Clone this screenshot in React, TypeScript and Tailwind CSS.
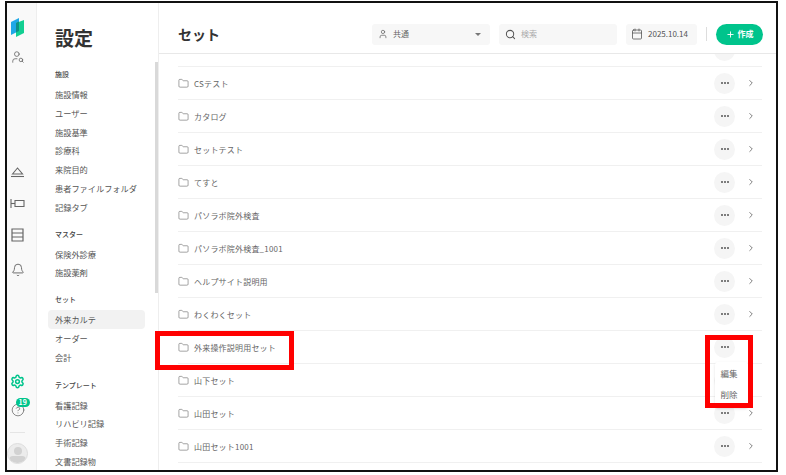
import { Bell, Calendar, ChevronRight, CircleHelp, Folder, Plus, Search, Settings, User, UserSearch } from "lucide-react"

const font = { fontFamily: '"Noto Sans CJK JP", "Noto Sans", sans-serif' }

const menu = [
  { title: "施設", top: "mt-[12px]", items: ["施設情報", "ユーザー", "施設基準", "診療科", "来院目的", "患者ファイルフォルダ", "記録タブ"] },
  { title: "マスター", top: "mt-[8px]", items: ["保険外診療", "施設薬剤"] },
  { title: "セット", top: "mt-[8px]", items: ["外来カルテ", "オーダー", "会計"] },
  { title: "テンプレート", top: "mt-[9px]", items: ["看護記録", "リハビリ記録", "手術記録", "文書記録物"] },
]

const rows = ["", "CSテスト", "カタログ", "セットテスト", "てすと", "パソラボ院外検査", "パソラボ院外検査_1001", "ヘルプサイト説明用", "わくわくセット", "外来操作説明用セット", "山下セット", "山田セット", "山田セット1001"]

const Logo = () => (
  <svg width="13" height="20" viewBox="0 0 13 20">
    <path d="M0 5 L8 1 V14 L0 18 Z" fill="#1fa8e6" />
    <path d="M5 6 L13 3 V16 L5 20 Z" fill="#12cf92" />
    <path d="M5 6 L8 4.5 V14 L5 15.5 Z" fill="#0d8f86" />
  </svg>
)

const DomeIcon = () => (
  <svg width="15" height="12" viewBox="0 0 15 12" fill="none" stroke="#666666" strokeWidth="1.1">
    <path d="M2.5 8 L7.5 2 L12.5 8 Z" />
    <path d="M1 10.5 H14" />
  </svg>
)

const BedIcon = () => (
  <svg width="15" height="11" viewBox="0 0 15 11" fill="none" stroke="#666666" strokeWidth="1.1">
    <path d="M1 1 V10" />
    <path d="M1 5.5 H5" />
    <path d="M5 2.5 H14 V8.5 H5 Z" />
  </svg>
)

const ListIcon = () => (
  <svg width="13" height="14" viewBox="0 0 13 14" fill="none" stroke="#666666" strokeWidth="1.2">
    <path d="M1 1 H12 V13 H1 Z" />
    <path d="M1 5 H12 M1 9 H12" />
  </svg>
)

const Rail = () => (
  <div className="w-[30px] shrink-0 bg-[#f9f9f9] border-r border-[#eeeeee] flex flex-col items-center pt-[14px] pr-[8px] text-[#666666]">
    <Logo />
    <UserSearch size={14} strokeWidth={1.4} className="mt-[13px]" />
    <div className="mt-[102px]"><DomeIcon /></div>
    <div className="mt-[20px]"><BedIcon /></div>
    <div className="mt-[19px]"><ListIcon /></div>
    <Bell size={14} strokeWidth={1.6} className="mt-[21px]" />
    <Settings size={15} strokeWidth={2.4} className="mt-[97px] text-[#00c48c]" />
    <div className="relative mt-[14px]">
      <CircleHelp size={14} strokeWidth={1.3} />
      <div className="absolute -top-[5px] left-[5px] h-[9px] px-[3px] rounded-full bg-[#00c48c] text-white text-[7px] leading-[9px] font-bold">19</div>
    </div>
    <div className="w-[15px] h-px bg-[#e5e5e5] mt-[15px]" />
    <div className="w-[21px] h-[21px] rounded-full bg-[#ececec] border border-[#dddddd] mt-[10px] flex flex-col items-center overflow-hidden shrink-0">
      <div className="w-[8px] h-[8px] rounded-full bg-[#d2d2d2] mt-[3px] shrink-0" />
      <div className="w-[17px] h-[8px] rounded-full bg-[#d2d2d2] mt-[1px] shrink-0" />
    </div>
  </div>
)

const Sidebar = () => (
  <div className="w-[122px] shrink-0 border-r border-[#eeeeee] relative overflow-hidden">
    <div className="pl-[18px] pt-[20px] text-[19px] leading-[30px] font-bold text-[#333333]">設定</div>
    {menu.map((group) => (
      <div key={group.title} className={group.top}>
        <div className="pl-[18px] text-[7px] leading-[18px] font-medium text-[#444444]">{group.title}</div>
        <div className="mt-[2px]">
          {group.items.map((item) => (
            <div
              key={item}
              className={`ml-[11px] mr-[13px] pl-[7px] h-[18.8px] rounded-[4px] text-[8.2px] leading-[18.8px] whitespace-nowrap text-[#555555] ${item === "外来カルテ" ? "bg-[#f2f2f2]" : ""}`}
            >
              {item}
            </div>
          ))}
        </div>
      </div>
    ))}
    <div className="absolute right-0 top-[59px] w-[3px] h-[231px] bg-[#d9d9d9]" />
  </div>
)

const Header = () => (
  <div className="h-[51px] shrink-0 border-b border-[#e8e8e8] flex items-center pl-[19px] pt-[12px]">
    <div className="text-[14px] font-bold text-[#333333] w-[194px]">セット</div>
    <div className="w-[118px] h-[21px] bg-[#f7f7f7] rounded-[3px] flex items-center pl-[6px] text-[#666666]">
      <User size={10} strokeWidth={1.8} />
      <span className="ml-[5px] text-[8px]">共通</span>
      <div className="ml-auto mr-[9px] w-0 h-0 border-x-[3px] border-x-transparent border-t-[3px] border-t-[#777777]" />
    </div>
    <div className="w-[118px] h-[21px] ml-[9px] bg-[#f7f7f7] rounded-[3px] flex items-center pl-[6px] text-[#555555]">
      <Search size={11} strokeWidth={2.2} />
      <span className="ml-[5px] text-[8px] text-[#aaaaaa]">検索</span>
    </div>
    <div className="w-[71px] h-[21px] ml-[9px] bg-[#f7f7f7] rounded-[3px] flex items-center pl-[5px] text-[#555555]">
      <Calendar size={12} strokeWidth={1.6} />
      <span className="ml-[5px] text-[8px]">2025.10.14</span>
    </div>
    <div className="w-px h-[14px] bg-[#dddddd] ml-[9px]" />
    <div className="w-[47px] h-[21px] ml-[9px] rounded-full bg-[#00c48c] flex items-center justify-center text-white">
      <Plus size={9} strokeWidth={2.4} />
      <span className="ml-[3px] text-[8px] font-bold">作成</span>
    </div>
  </div>
)

const Row = ({ name, open }: { name: string; open: boolean }) => (
  <div className="h-[33px] shrink-0 border-b border-[#f0f0f0] flex items-center relative">
    {name && <Folder size={11} strokeWidth={1.3} className="text-[#666666] shrink-0" />}
    <span className="ml-[5px] pt-[2px] text-[8px] tracking-[0.2px] text-[#666666] whitespace-nowrap">{name}</span>
    <div className="ml-auto w-[21px] h-[21px] rounded-full bg-[#f5f5f5] flex items-center justify-center gap-[1px]">
      <i className="w-[2px] h-[2px] rounded-full bg-[#555555]" />
      <i className="w-[2px] h-[2px] rounded-full bg-[#555555]" />
      <i className="w-[2px] h-[2px] rounded-full bg-[#555555]" />
    </div>
    {open ? (
      <div className="absolute right-[14px] top-[31px] z-10 w-[33px] h-[46px] bg-white rounded-[3px] shadow-sm flex flex-col items-center pr-[5px] pt-[5px] gap-[8px] text-[8.5px] leading-[13px] text-[#666666]">
        <span>編集</span>
        <span>削除</span>
      </div>
    ) : null}
    <ChevronRight size={10} strokeWidth={2} className="ml-[11px] mr-[6px] text-[#666666]" />
  </div>
)

export default function App() {
  return (
    <div className="w-[786px] h-[475px] bg-white relative overflow-hidden pl-[5px] pt-px" style={font}>
      <div className="w-[773px] h-[471px] border-2 border-[#111111] flex overflow-hidden bg-white">
        <Rail />
        <Sidebar />
        <div className="flex-1 min-w-0 flex flex-col">
          <Header />
          <div className="flex-1 overflow-hidden pl-[19px] pr-[14px]">
            <div className="-mt-[20px] flex flex-col">
              {rows.map((name) => (
                <Row key={name} name={name} open={name === "外来操作説明用セット"} />
              ))}
            </div>
          </div>
        </div>
      </div>
      <div className="absolute z-20 left-[155px] top-[331px] w-[139px] h-[39px] border-[5px] border-[#ff0000]" />
      <div className="absolute z-20 left-[705px] top-[335px] w-[48px] h-[73px] border-[5px] border-[#ff0000]" />
    </div>
  )
}
